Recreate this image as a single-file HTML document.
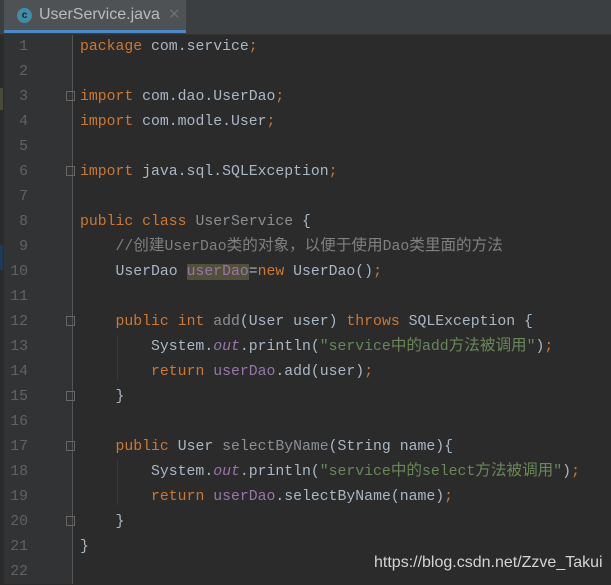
<!DOCTYPE html>
<html><head><meta charset="utf-8"><style>
body{margin:0;width:611px;height:584px;overflow:hidden;background:#2b2b2b;position:relative;font-family:"Liberation Mono",monospace}
.tabbar{position:absolute;left:0;top:0;width:611px;height:34px;background:#3c3f41;border-bottom:1px solid #323232}
.tab{position:absolute;left:4px;top:0;width:182px;height:30px;background:#4e5254;border-bottom:3px solid #4a88c7}
.ic{position:absolute;left:13px;top:8px;width:15px;height:15px;border-radius:50%;background:#3d8ea9;color:#222;font:bold 10px "Liberation Sans",sans-serif;text-align:center;line-height:15px}
.tt{position:absolute;left:35px;top:6px;font:16px "Liberation Sans",sans-serif;color:#bbbbbb}
.x{position:absolute;left:164px;top:5px;font:15px "Liberation Sans",sans-serif;color:#6e6e6e}
.gutter{position:absolute;left:0;top:35px;width:72px;height:549px;background:#313335;border-right:1px solid #555}
.strip{position:absolute;left:0;top:35px;width:4px;height:549px;background:#2b2b2b}
.ln{position:absolute;left:0;width:28px;text-align:right;color:#606366;font-size:14.8px;font-family:"Liberation Mono",monospace}
.ln div,.code div{height:25px;line-height:25px;overflow:visible;white-space:pre}
.code{position:absolute;left:80px;font-size:14.8px;color:#a9b7c6}
.k{color:#cc7832}.s{color:#6a8759}.c{color:#808080}.f{color:#9876aa}.g{color:#8a8f94}.i{font-style:italic;color:#9876aa}
.cj{font-family:"Noto Sans CJK SC",sans-serif;font-size:15.6px;line-height:1}
.hl{background:#52503a}
.fold{position:absolute;left:66px;width:9px;height:10px;border:1px solid #666;box-sizing:border-box}
.guide{position:absolute;left:117px;width:1px;background:#3b3b3b}
.wm{position:absolute;left:374px;top:554px;font:16px "Liberation Sans",sans-serif;color:#d4d4d4}
</style></head><body>
<div class="tabbar"><div class="tab"><div class="ic">c</div><div class="tt">UserService.java</div><div class="x">✕</div></div></div>
<div class="gutter"></div><div class="strip"></div>
<div style="position:absolute;left:0;top:88px;width:3px;height:22px;background:#4a4a3a"></div>
<div style="position:absolute;left:0;top:245px;width:3px;height:25px;background:#1e3a56"></div>
<div class="guide" style="top:335px;height:45px"></div>
<div class="guide" style="top:460px;height:45px"></div>
<div class="fold" style="top:91px"></div><div class="fold" style="top:166px"></div>
<div class="fold" style="top:316px"></div><div class="fold" style="top:391px"></div>
<div class="fold" style="top:441px"></div><div class="fold" style="top:516px"></div>
<div class="code" style="top:35px">
<div><span class="k">package</span> com.service<span class="k">;</span></div>
<div> </div>
<div><span class="k">import</span> com.dao.UserDao<span class="k">;</span></div>
<div><span class="k">import</span> com.modle.User<span class="k">;</span></div>
<div> </div>
<div><span class="k">import</span> java.sql.SQLException<span class="k">;</span></div>
<div> </div>
<div><span class="k">public class</span> <span class="g">UserService</span> {</div>
<div>    <span class="c">//<span class="cj">创建</span>UserDao<span class="cj">类的对象，以便于使用</span>Dao<span class="cj">类里面的方法</span></span></div>
<div>    UserDao <span class="f hl">userDao</span>=<span class="k">new</span> UserDao()<span class="k">;</span></div>
<div> </div>
<div>    <span class="k">public int</span> <span class="g">add</span>(User user) <span class="k">throws</span> SQLException {</div>
<div>        System.<span class="i">out</span>.println(<span class="s">"service<span class="cj">中的</span>add<span class="cj">方法被调用</span>"</span>)<span class="k">;</span></div>
<div>        <span class="k">return</span> <span class="f">userDao</span>.add(user)<span class="k">;</span></div>
<div>    }</div>
<div> </div>
<div>    <span class="k">public</span> User <span class="g">selectByName</span>(String name){</div>
<div>        System.<span class="i">out</span>.println(<span class="s">"service<span class="cj">中的</span>select<span class="cj">方法被调用</span>"</span>)<span class="k">;</span></div>
<div>        <span class="k">return</span> <span class="f">userDao</span>.selectByName(name)<span class="k">;</span></div>
<div>    }</div>
<div>}</div>
</div>
<div class="ln" style="top:35px"><div>1</div><div>2</div><div>3</div><div>4</div><div>5</div><div>6</div><div>7</div><div>8</div><div>9</div><div>10</div><div>11</div><div>12</div><div>13</div><div>14</div><div>15</div><div>16</div><div>17</div><div>18</div><div>19</div><div>20</div><div>21</div><div>22</div></div>
<div class="wm">https://blog.csdn.net/Zzve_Takui</div>
</body></html>
